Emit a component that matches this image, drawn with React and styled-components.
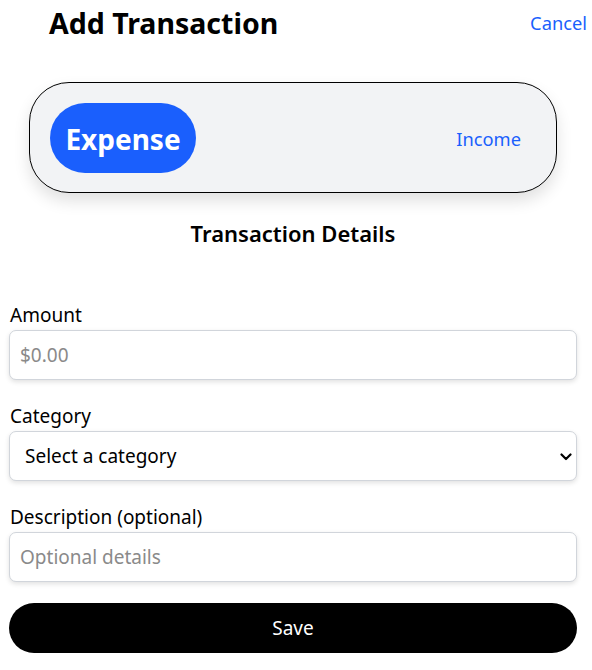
import React, { useState } from 'react';
import styled, { createGlobalStyle } from 'styled-components';

const GlobalStyle = createGlobalStyle`
  body {
    margin: 0;
    background: #fff;
    font-family: 'Noto Sans', 'Open Sans', sans-serif;
    color: #000;
  }
  * { box-sizing: border-box; }
`;

const Page = styled.div`
  width: 592px;
  padding: 0 15px 0 9px;
`;

const Header = styled.header`
  display: flex;
  justify-content: space-between;
  align-items: flex-start;
  padding: 4px 0 0 40px;
  margin-right: -10px;
`;

const Title = styled.h1`
  margin: 0;
  font-size: 28.5px;
  font-weight: 700;
  line-height: 38px;
`;

const LinkButton = styled.button`
  border: 0;
  background: none;
  padding: 0;
  font-family: inherit;
  font-size: 18.3px;
  line-height: 28px;
  color: #1a5ffd;
  cursor: pointer;
  margin-top: 5px;
`;

const Toggle = styled.div`
  display: flex;
  justify-content: space-between;
  align-items: center;
  width: 528px;
  height: 111px;
  margin: 40px 0 0 20px;
  padding: 20px 35px 20px 20px;
  border: 1px solid #000;
  border-radius: 40px;
  background: #f2f3f5;
  box-shadow: 0 8px 16px rgba(0, 0, 0, 0.12);
`;

const Segment = styled.button`
  border: 0;
  font-family: inherit;
  cursor: pointer;
  border-radius: 35px;
  background: ${p => (p.$active ? '#1a5ffd' : 'transparent')};
  color: ${p => (p.$active ? '#fff' : '#1a5ffd')};
  font-size: ${p => (p.$active ? '28px' : '18.3px')};
  font-weight: ${p => (p.$active ? 700 : 400)};
  width: ${p => (p.$active ? '146px' : 'auto')};
  height: ${p => (p.$active ? '70px' : 'auto')};
  padding: ${p => (p.$active ? '2px 0 0' : '0')};
  margin-top: ${p => (p.$active ? '0' : '2px')};
`;

const SectionTitle = styled.h2`
  margin: 24px 0 0;
  text-align: center;
  font-size: 22px;
  font-weight: 600;
  line-height: 32px;
`;

const Form = styled.form`
  display: flex;
  flex-direction: column;
  gap: 23px;
  margin-top: 53px;
`;

const Field = styled.label`
  display: flex;
  flex-direction: column;
  gap: 2px;
  width: 568px;
`;

const LabelText = styled.span`
  font-size: 19px;
  line-height: 26px;
  padding-left: 1px;
`;

const Control = `
  width: 568px;
  height: 50px;
  border: 1px solid #d1d5db;
  border-radius: 7px;
  background: #fff;
  box-shadow: 0 2px 5px rgba(0, 0, 0, 0.12);
  font-family: inherit;
  font-size: 19px;
  color: #000;
  outline: none;
`;

const Input = styled.input`
  ${Control}
  padding: 0 10px;
  &::placeholder { color: #8a8a8a; }
`;

const SelectBox = styled.div`
  position: relative;
  ${Control}
  display: flex;
  align-items: center;
  padding: 0 15px;
`;

const Select = styled.select`
  position: absolute;
  inset: 0;
  opacity: 0;
  cursor: pointer;
`;

const Chevron = styled.svg`
  position: absolute;
  right: 4px;
  top: 21px;
`;

const SaveButton = styled.button`
  width: 568px;
  height: 50px;
  margin-top: -2px;
  border: 0;
  border-radius: 25px;
  background: #000;
  color: #fff;
  font-family: inherit;
  font-size: 19px;
  cursor: pointer;
`;

export default function App() {
  const [type, setType] = useState('expense');
  return (
    <Page>
      <GlobalStyle />
      <Header>
        <Title>Add Transaction</Title>
        <LinkButton type="button">Cancel</LinkButton>
      </Header>
      <Toggle>
        <Segment type="button" $active={type === 'expense'} onClick={() => setType('expense')}>
          Expense
        </Segment>
        <Segment type="button" $active={type === 'income'} onClick={() => setType('income')}>
          Income
        </Segment>
      </Toggle>
      <SectionTitle>Transaction Details</SectionTitle>
      <Form onSubmit={e => e.preventDefault()}>
        <Field>
          <LabelText>Amount</LabelText>
          <Input placeholder="$0.00" inputMode="decimal" />
        </Field>
        <Field>
          <LabelText>Category</LabelText>
          <SelectBox>
            Select a category
            <Select defaultValue="">
              <option value="">Select a category</option>
            </Select>
            <Chevron width="12" height="8" viewBox="0 0 12 8">
              <path d="M1.5 1.5 6 6l4.5-4.5" fill="none" stroke="#000" strokeWidth="2.2" strokeLinecap="round" strokeLinejoin="round" />
            </Chevron>
          </SelectBox>
        </Field>
        <Field>
          <LabelText>Description (optional)</LabelText>
          <Input placeholder="Optional details" />
        </Field>
        <SaveButton type="submit">Save</SaveButton>
      </Form>
    </Page>
  );
}
